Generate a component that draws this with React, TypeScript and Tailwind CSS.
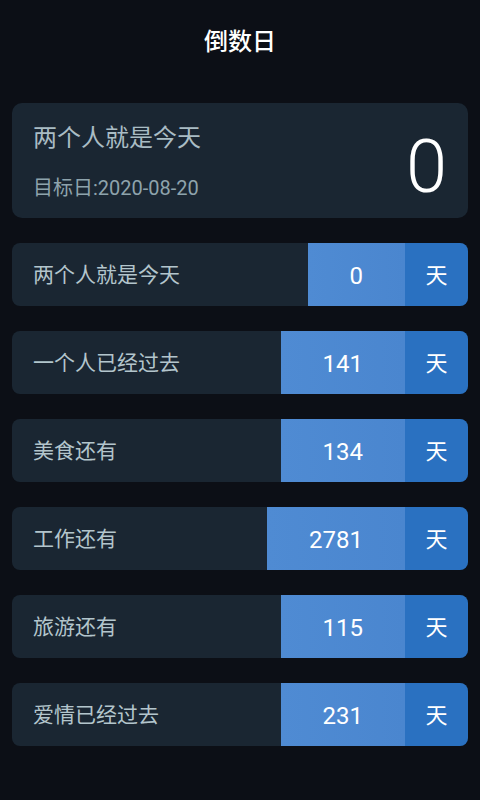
import React from 'react';

type Item = { title: string; days: number };

const items: Item[] = [
  { title: '两个人就是今天', days: 0 },
  { title: '一个人已经过去', days: 141 },
  { title: '美食还有', days: 134 },
  { title: '工作还有', days: 2781 },
  { title: '旅游还有', days: 115 },
  { title: '爱情已经过去', days: 231 },
];

const font = { fontFamily: 'Roboto, "Noto Sans CJK SC", "Noto Sans", sans-serif' };

const Row: React.FC<{ item: Item }> = ({ item }) => (
  <div className="flex h-[63px] overflow-hidden rounded-[8px] bg-[#1a2632]">
    <div className="flex flex-1 items-center pl-[21px] pt-[2px] text-[21px] text-[#b3c5cc]">{item.title}</div>
    <div className="flex items-center bg-gradient-to-r from-[#4f8bd3] to-[#4a86cf] px-[42px] pt-[2px] text-[24px] text-white">
      {item.days}
    </div>
    <div className="flex w-[63px] items-center justify-center bg-[#2a71c1] pt-[2px] text-[22px] text-white">天</div>
  </div>
);

const App: React.FC = () => {
  return (
    <div className="min-h-[800px] w-full bg-[#0c0f16] px-[12px]" style={font}>
      <div className="flex h-[84px] items-center justify-center text-[24px] font-medium text-white">倒数日</div>

      <div className="mt-[19px] flex h-[115px] items-center justify-between rounded-[10px] bg-[#1a2632] pl-[21px] pr-[21px]">
        <div className="flex flex-col self-start pt-[21px]">
          <div className="text-[24px] leading-[28px] text-[#a9bcc4]">两个人就是今天</div>
          <div className="mt-[23px] text-[20px] leading-[26px] text-[#8ea3ac]">目标日:2020-08-20</div>
        </div>
        <div className="mt-[13px] text-[74px] font-light leading-none text-white">0</div>
      </div>

      <div className="mt-[25px] flex flex-col gap-[25px]">
        {items.map((it) => (
          <Row key={it.title} item={it} />
        ))}
      </div>
    </div>
  );
};

export default App;
